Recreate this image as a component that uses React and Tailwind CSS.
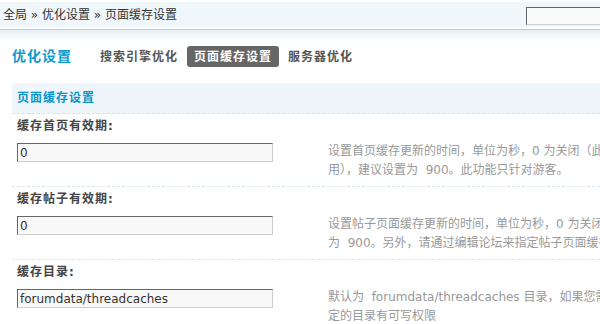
import React from "react";

const rows = [
  {
    label: "缓存首页有效期:",
    value: "0",
    tips: [
      "设置首页缓存更新的时间，单位为秒，0 为关闭（此处关闭是指缓存一次后就不再更新",
      "用），建议设置为\u00a0\u00a0900。此功能只针对游客。",
    ],
  },
  {
    label: "缓存帖子有效期:",
    value: "0",
    tips: [
      "设置帖子页面缓存更新的时间，单位为秒，0 为关闭，建议设置",
      "为\u00a0\u00a0900。另外，请通过编辑论坛来指定帖子页面缓存的功能是否开启",
    ],
  },
  {
    label: "缓存目录:",
    value: "forumdata/threadcaches",
    tips: [
      "默认为\u00a0\u00a0forumdata/threadcaches 目录，如果您需要将其指定为其他目录，请确保您指",
      "定的目录有可写权限",
    ],
  },
];

export default function App() {
  return (
    <div className="w-[600px] h-[324px] overflow-hidden bg-white text-[12px] text-[#333] font-['DejaVu_Sans','Noto_Sans_CJK_SC',sans-serif]">
      {/* top nav */}
      <div className="pt-[2px]">
        <div className="h-[25px] bg-[#f0f7fb] flex items-center justify-between pl-[3px] overflow-hidden">
          <span className="whitespace-nowrap">全局 » 优化设置 » 页面缓存设置</span>
          <input
            className="w-[80px] h-[18px] -mr-[6px] mt-[2px] bg-[#fafafa] border border-[#ccc] border-t-[#666] border-l-[#666] outline-none"
            readOnly
          />
        </div>
      </div>
      <div className="h-[2px] bg-white" />
      <div className="h-[1px] bg-[#b7cfdb]" />
      <div className="h-[11px] bg-gradient-to-b from-[#e4eef5] to-white" />

      {/* tabs */}
      <div className="mt-[5px] h-[21px] flex items-center pl-[12px]">
        <h3 className="text-[14px] font-bold tracking-[1px] text-[#0d9ad0] w-[81px]">优化设置</h3>
        <ul className="flex gap-[2px]">
          <li className="px-[7px] h-[21px] flex items-center rounded-[3px] font-bold tracking-[1px] text-[#555]">搜索引擎优化</li>
          <li className="px-[7px] h-[21px] flex items-center rounded-[3px] font-bold tracking-[1px] bg-[#666] text-white">页面缓存设置</li>
          <li className="px-[7px] h-[21px] flex items-center rounded-[3px] font-bold tracking-[1px] text-[#555]">服务器优化</li>
        </ul>
      </div>

      {/* form */}
      <div className="mt-[16px] ml-[12px]">
        <div className="h-[30px] bg-[#eef5fb] flex items-center pl-[5px] font-bold tracking-[1px] text-[#0a94c8] border-b border-dashed border-[#d3e3ee] box-content">
          页面缓存设置
        </div>
        {rows.map((row, i) => (
          <div key={i} className="border-b border-dashed border-[#d9e6ef]">
            <div className="h-[24px] flex items-center pl-[5px] font-bold tracking-[1px] text-[#444]">
              {row.label}
            </div>
            <div className="h-[48px] flex">
              <div className="w-[316px] pl-[5px] pt-[5px] shrink-0">
                <input
                  className="w-[256px] h-[19px] pl-[2px] bg-[#f9f9f9] border border-[#ccc] border-t-[#666] border-l-[#666] outline-none text-[12px] text-[#333]"
                  defaultValue={row.value}
                />
              </div>
              <div className="pt-[4px] leading-[19px] text-[#999] whitespace-nowrap">
                {row.tips.map((t, j) => (
                  <div key={j}>{t}</div>
                ))}
              </div>
            </div>
          </div>
        ))}
      </div>
    </div>
  );
}
